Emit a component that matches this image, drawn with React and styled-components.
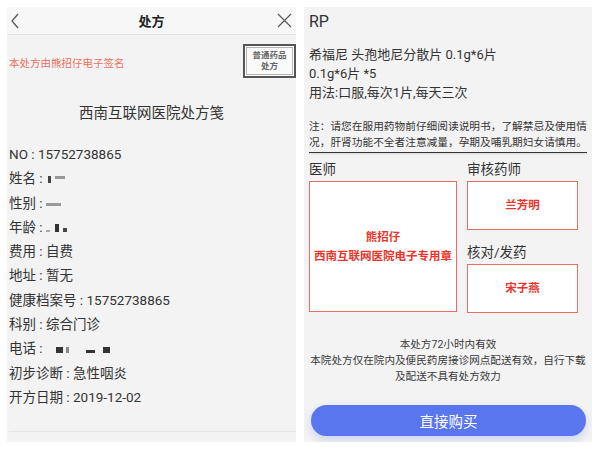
import styled, { createGlobalStyle } from "styled-components";

const Global = createGlobalStyle`
  html, body { margin: 0; padding: 0; background: #fff; }
  body {
    font-family: Roboto, "Noto Sans CJK SC", "Liberation Sans", sans-serif;
    color: #333;
  }
`;

const infoRows = [
  { label: "NO", value: "15752738865" },
  { label: "姓名", blots: [[2, 3, 7, "#444", 0], [4, 10, 3, "#999", 4]] },
  { label: "性别", blots: [[0, 15, 3, "#999", 2]] },
  { label: "年龄", blots: [[0, 4, 2, "#aaa", 0], [5, 4, 8, "#333", 0], [4, 4, 4, "#444", 0]] },
  { label: "费用", value: "自费" },
  { label: "地址", value: "暂无" },
  { label: "健康档案号", value: "15752738865" },
  { label: "科别", value: "综合门诊" },
  { label: "电话", blots: [[10, 7, 6, "#333", 0], [3, 3, 6, "#888", 0], [17, 9, 3, "#333", 0], [8, 7, 6, "#333", 0]] },
  { label: "初步诊断", value: "急性咽炎" },
  { label: "开方日期", value: "2019-12-02" },
];

const App = () => {
  return (
    <>
      <Global />
      <Page>
        <Panel>
          <Header>
            <svg width="10" height="16" viewBox="0 0 10 16">
              <path d="M8 1 L2 8 L8 15" fill="none" stroke="#555" strokeWidth="1.2" />
            </svg>
            <HeaderTitle>处方</HeaderTitle>
            <svg width="15" height="15" viewBox="0 0 15 15">
              <path d="M1 1 L14 14 M14 1 L1 14" fill="none" stroke="#555" strokeWidth="1.1" />
            </svg>
          </Header>
          <SignRow>
            <SignText>本处方由熊招仔电子签名</SignText>
            <TypeBadge>
              普通药品
              <br />
              处方
            </TypeBadge>
          </SignRow>
          <DocTitle>西南互联网医院处方笺</DocTitle>
          <InfoList>
            {infoRows.map((r) => (
              <InfoRow key={r.label}>
                {r.label}
                <Colon> : </Colon>
                {r.value}
                {r.blots &&
                  r.blots.map((b, i) => (
                    <Blot key={i} gap={b[0]} w={b[1]} h={b[2]} c={b[3]} lift={b[4]} />
                  ))}
              </InfoRow>
            ))}
          </InfoList>
          <BottomRule />
        </Panel>

        <Panel>
          <RightBody>
            <Rp>RP</Rp>
            <MedBlock>
              <div>希福尼 头孢地尼分散片 0.1g*6片</div>
              <div>0.1g*6片 *5</div>
              <div>用法:口服,每次1片,每天三次</div>
            </MedBlock>
            <Notice>
              注：请您在服用药物前仔细阅读说明书，了解禁忌及使用情况，肝肾功能不全者注意减量，孕期及哺乳期妇女请慎用。
            </Notice>
            <SignGrid>
              <SignCol>
                <SignLabel>医师</SignLabel>
                <StampBox h={131}>
                  熊招仔
                  <br />
                  西南互联网医院电子专用章
                </StampBox>
              </SignCol>
              <SignCol>
                <SignLabel>审核药师</SignLabel>
                <StampBox h={49}>兰芳明</StampBox>
                <SignLabel top={13}>核对/发药</SignLabel>
                <StampBox h={49}>宋子燕</StampBox>
              </SignCol>
            </SignGrid>
            <Footnote>
              本处方72小时内有效
              <br />
              本院处方仅在院内及便民药房接诊网点配送有效，自行下载
              <br />
              及配送不具有处方效力
            </Footnote>
            <BuyButton>直接购买</BuyButton>
          </RightBody>
        </Panel>
      </Page>
    </>
  );
};
export default App;

const Page = styled.div`
  width: 600px;
  height: 450px;
  box-sizing: border-box;
  padding: 7px 8px 8px 7px;
  display: grid;
  grid-template-columns: 289px 288px;
  column-gap: 8px;
`;

const Panel = styled.div`
  background: #f3f3f3;
  display: flex;
  flex-direction: column;
  overflow: hidden;
`;

const Header = styled.div`
  height: 28px;
  box-sizing: border-box;
  background: #f7f7f7;
  border-bottom: 1px solid #e4e4e4;
  display: flex;
  align-items: center;
  justify-content: space-between;
  padding: 0 4px 0 3px;
`;

const HeaderTitle = styled.div`
  font-size: 13px;
  font-weight: bold;
  color: #222;
  margin-left: 6px;
`;

const SignRow = styled.div`
  display: flex;
  justify-content: space-between;
  align-items: center;
  margin-top: 9px;
  padding-left: 2px;
`;

const SignText = styled.div`
  font-size: 10.5px;
  color: #e7715f;
  margin-top: 3px;
`;

const TypeBadge = styled.div`
  width: 53px;
  height: 34px;
  box-sizing: border-box;
  border: 2px solid #555;
  box-shadow: inset 0 0 0 1px #fff, inset 0 0 0 2px #b5b5b5;
  background: #fafafa;
  font-size: 8.5px;
  line-height: 11px;
  font-weight: bold;
  color: #666;
  display: flex;
  align-items: center;
  justify-content: center;
  text-align: center;
`;

const DocTitle = styled.div`
  text-align: center;
  font-size: 14.5px;
  color: #333;
  margin-top: 23px;
`;

const InfoList = styled.div`
  margin-top: 20px;
  padding-left: 2px;
  display: flex;
  flex-direction: column;
`;

const InfoRow = styled.div`
  font-size: 13.5px;
  line-height: 24.3px;
  height: 24.3px;
  color: #333;
  white-space: nowrap;
`;

const Colon = styled.span`
  white-space: pre;
  font-size: 13.5px;
`;

const Blot = styled.span`
  display: inline-block;
  width: ${(p) => p.w}px;
  height: ${(p) => p.h}px;
  margin-left: ${(p) => p.gap}px;
  background: ${(p) => p.c};
  vertical-align: ${(p) => p.lift}px;
`;

const BottomRule = styled.div`
  margin-top: auto;
  margin-bottom: 10px;
  margin-left: 2px;
  border-top: 1px solid #e6e6e6;
`;

const RightBody = styled.div`
  padding: 4px 5px 0 5px;
  display: flex;
  flex-direction: column;
  height: 100%;
  box-sizing: border-box;
`;

const Rp = styled.div`
  font-size: 16px;
  line-height: 22px;
  color: #333;
`;

const MedBlock = styled.div`
  margin-top: 12px;
  font-size: 13px;
  line-height: 19px;
  color: #333;
`;

const Notice = styled.div`
  margin-top: 17px;
  font-size: 10.7px;
  line-height: 16px;
  color: #333;
  padding-bottom: 1px;
  border-bottom: 1.5px solid #333;
  box-shadow: 0 1.5px 0 #e2e2e2;
`;

const SignGrid = styled.div`
  margin-top: 7px;
  display: grid;
  grid-template-columns: 148px 111px;
  column-gap: 10px;
`;

const SignCol = styled.div`
  display: flex;
  flex-direction: column;
`;

const SignLabel = styled.div`
  font-size: 13.5px;
  line-height: 18px;
  color: #333;
  margin-top: ${(p) => p.top || 0}px;
  margin-bottom: 3px;
`;

const StampBox = styled.div`
  height: ${(p) => p.h}px;
  box-sizing: border-box;
  border: 1px solid #ec6b62;
  background: #fff;
  display: flex;
  align-items: center;
  justify-content: center;
  text-align: center;
  color: #e8362c;
  font-weight: bold;
  font-size: 11.5px;
  line-height: 19px;
`;

const Footnote = styled.div`
  margin-top: 24px;
  text-align: center;
  font-size: 10.6px;
  line-height: 16px;
  color: #3a3a3a;
`;

const BuyButton = styled.div`
  margin: 20px 1px 0 2px;
  height: 31px;
  border-radius: 16px;
  background: #5a76ef;
  color: #fff;
  font-size: 14.5px;
  display: flex;
  align-items: center;
  justify-content: center;
  box-shadow: 0 4px 8px rgba(90, 118, 239, 0.25);
`;
